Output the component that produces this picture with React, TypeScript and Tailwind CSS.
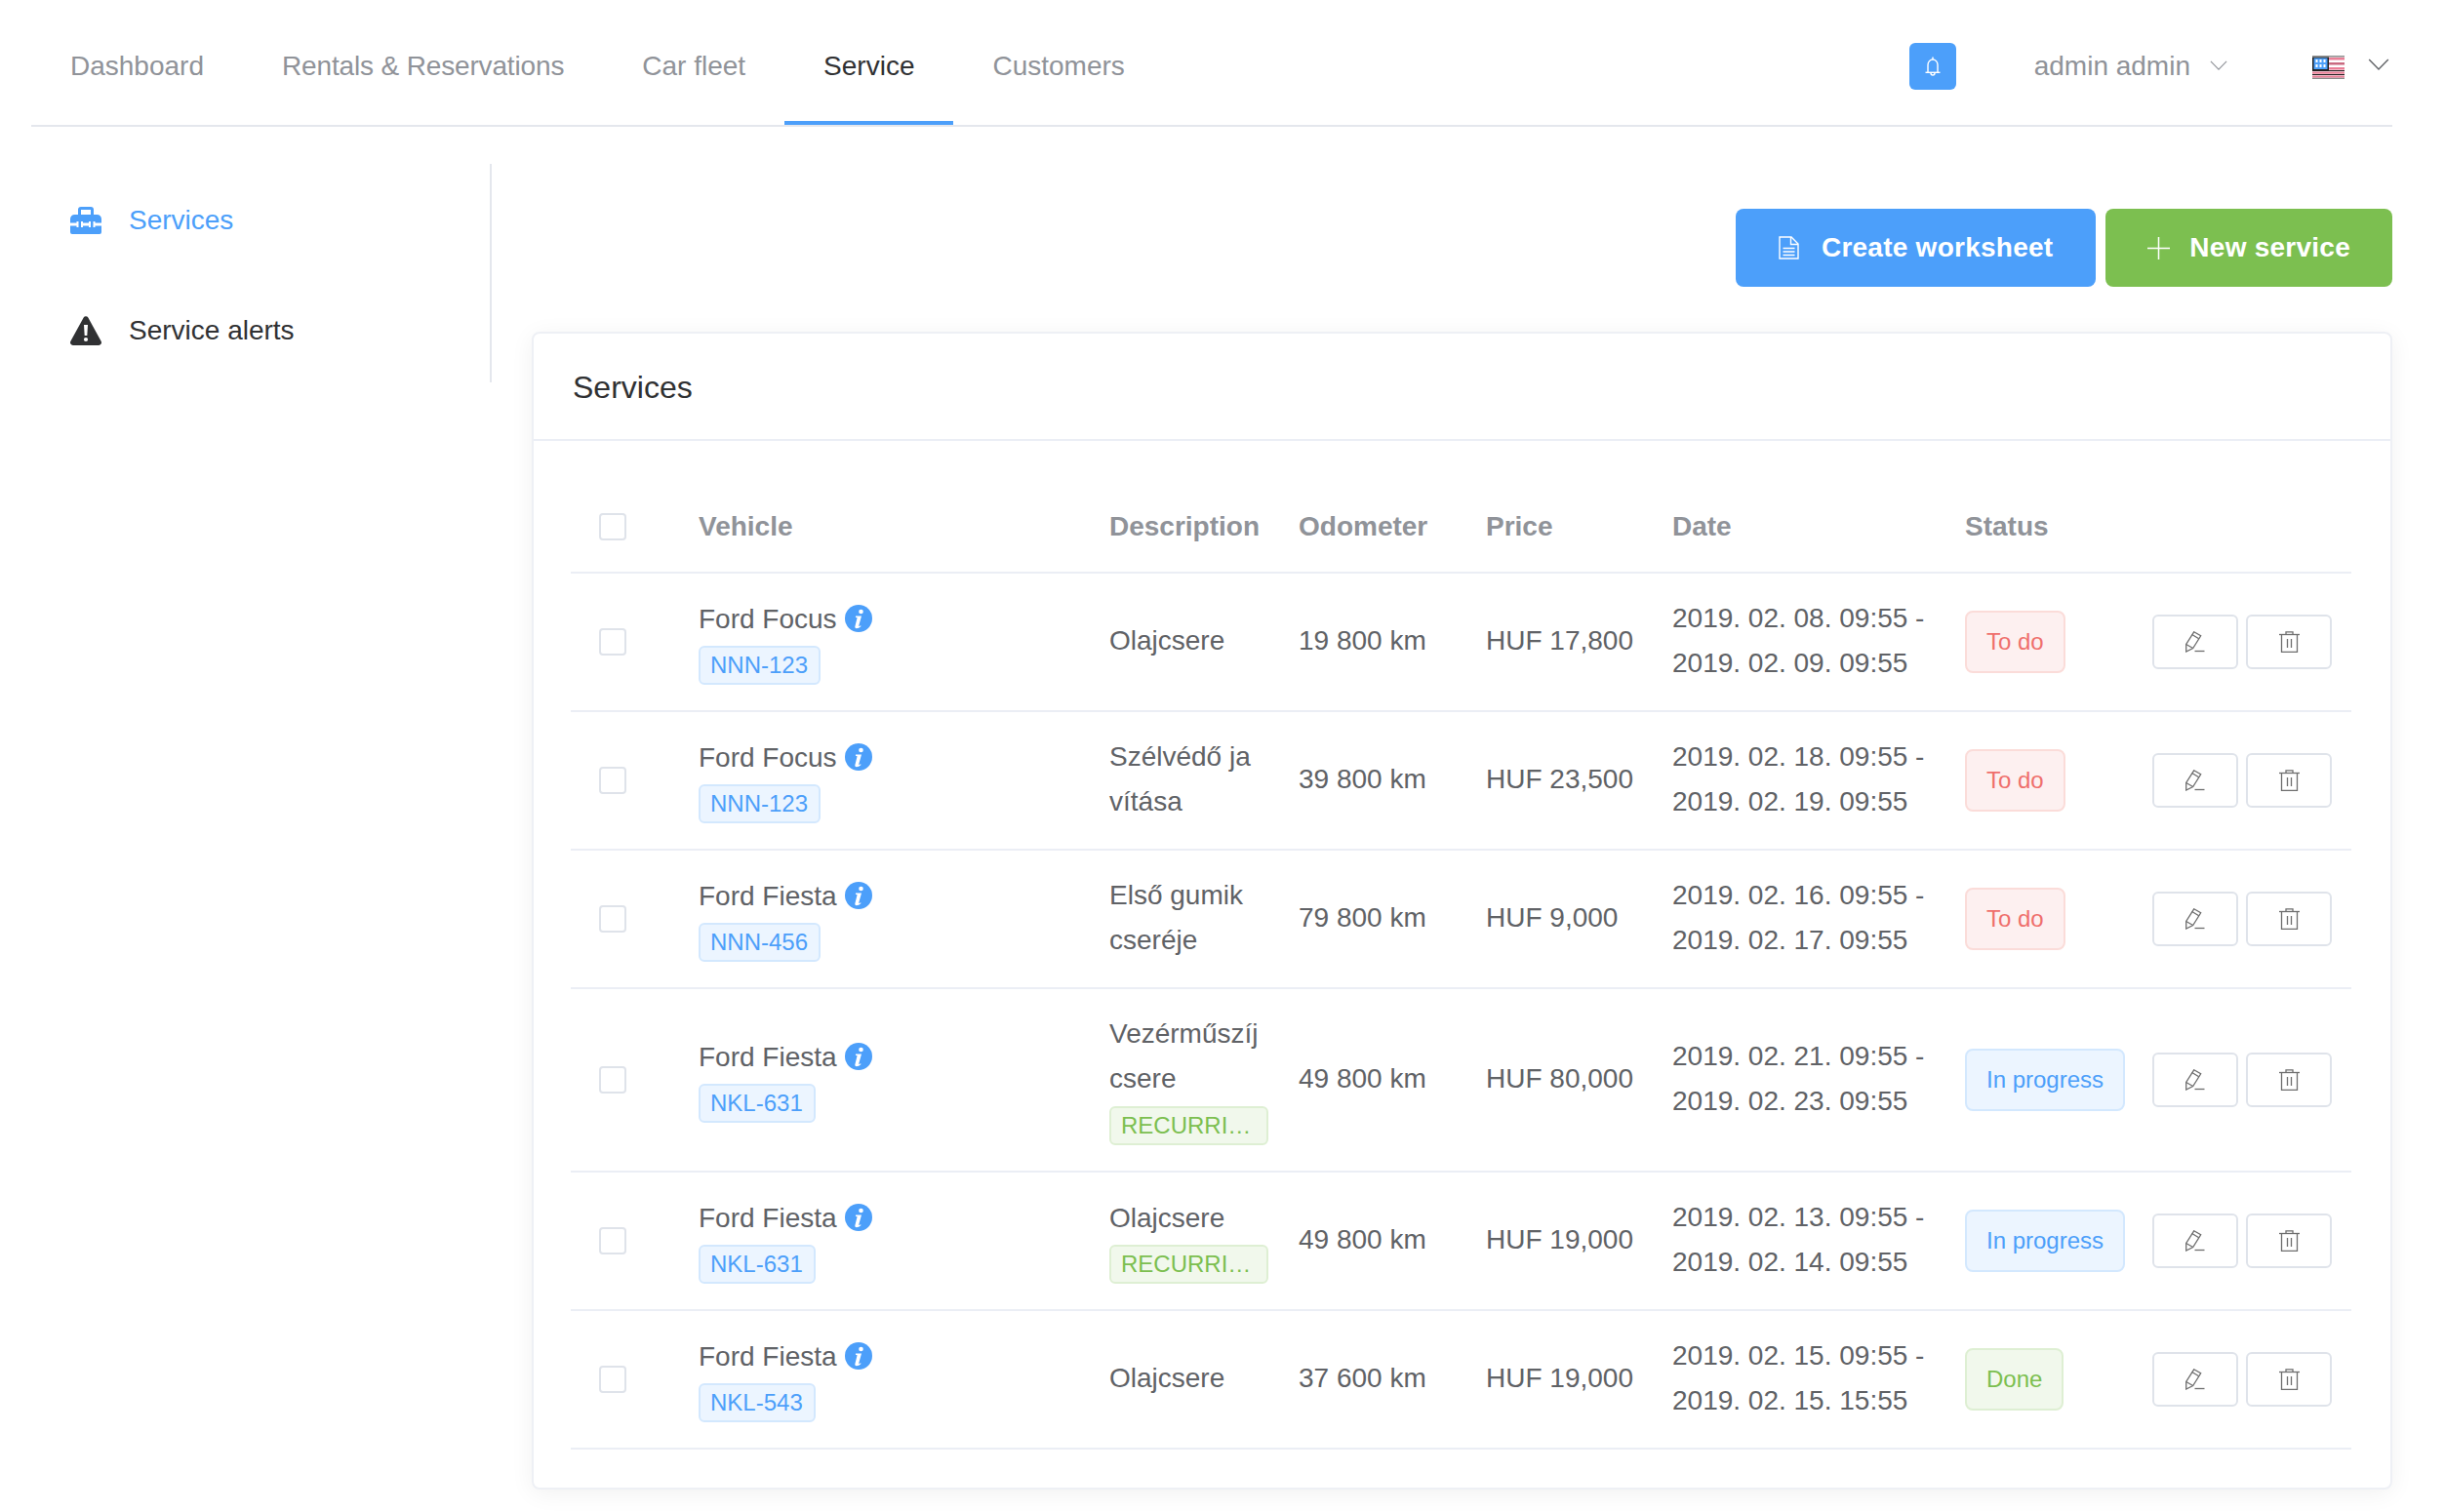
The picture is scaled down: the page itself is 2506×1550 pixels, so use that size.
import React from 'react';

type Tone = 'red' | 'blue' | 'green';

type Row = {
  vehicle: string;
  plate: string;
  description: string[];
  recurring?: boolean;
  odometer: string;
  price: string;
  from: string;
  to: string;
  status: string;
  tone: Tone;
};

const rows: Row[] = [
  { vehicle: 'Ford Focus', plate: 'NNN-123', description: ['Olajcsere'], odometer: '19 800 km', price: 'HUF 17,800', from: '2019. 02. 08. 09:55 -', to: '2019. 02. 09. 09:55', status: 'To do', tone: 'red' },
  { vehicle: 'Ford Focus', plate: 'NNN-123', description: ['Szélvédő ja', 'vítása'], odometer: '39 800 km', price: 'HUF 23,500', from: '2019. 02. 18. 09:55 -', to: '2019. 02. 19. 09:55', status: 'To do', tone: 'red' },
  { vehicle: 'Ford Fiesta', plate: 'NNN-456', description: ['Első gumik', 'cseréje'], odometer: '79 800 km', price: 'HUF 9,000', from: '2019. 02. 16. 09:55 -', to: '2019. 02. 17. 09:55', status: 'To do', tone: 'red' },
  { vehicle: 'Ford Fiesta', plate: 'NKL-631', description: ['Vezérműszíj', 'csere'], recurring: true, odometer: '49 800 km', price: 'HUF 80,000', from: '2019. 02. 21. 09:55 -', to: '2019. 02. 23. 09:55', status: 'In progress', tone: 'blue' },
  { vehicle: 'Ford Fiesta', plate: 'NKL-631', description: ['Olajcsere'], recurring: true, odometer: '49 800 km', price: 'HUF 19,000', from: '2019. 02. 13. 09:55 -', to: '2019. 02. 14. 09:55', status: 'In progress', tone: 'blue' },
  { vehicle: 'Ford Fiesta', plate: 'NKL-543', description: ['Olajcsere'], odometer: '37 600 km', price: 'HUF 19,000', from: '2019. 02. 15. 09:55 -', to: '2019. 02. 15. 15:55', status: 'Done', tone: 'green' },
];

const toneClass: Record<Tone, string> = {
  red: 'bg-[#fdf0f0] border-[#fbdcd9] text-[#ef6f6c]',
  blue: 'bg-[#ecf5ff] border-[#d3e8fe] text-[#4c9ffa]',
  green: 'bg-[#f1f8ec] border-[#deefd3] text-[#7cbf50]',
};

const tabs = ['Dashboard', 'Rentals & Reservations', 'Car fleet', 'Service', 'Customers'];

const Chevron = ({ className }: { className: string }) => (
  <svg viewBox="0 0 20 11" fill="none" stroke="currentColor" strokeWidth="1.3" className={className}>
    <path d="M1 1l9 9 9-9" />
  </svg>
);

const BellIcon = () => (
  <svg width="16" height="21" viewBox="0 0 16 21" fill="none" stroke="white" strokeWidth="1.4">
    <path d="M8 0.5V3" />
    <path d="M3 16V8.5a5 5.5 0 0 1 10 0V16" />
    <path d="M0.5 16.3H15.5" />
    <path d="M6 17a2 2 0 0 0 4 0" />
  </svg>
);

const FlagIcon = () => (
  <svg width="33" height="24" viewBox="0 0 33 24" className="mt-[1px]">
    <rect width="33" height="24" fill="#fff" />
    <rect width="33" height="1.5" fill="#8c8c8c" />
    <rect y="22.5" width="33" height="1.5" fill="#8c8c8c" />
    <rect x="16" y="2" width="17" height="2.5" fill="#ea7f97" />
    <rect x="16" y="7" width="17" height="2.5" fill="#c96a80" />
    <rect x="16" y="12" width="17" height="2.5" fill="#ea7f97" />
    <rect y="16.5" width="33" height="2.2" fill="#ea7f97" />
    <rect y="20.5" width="33" height="2" fill="#ea7f97" />
    <rect y="15" width="33" height="1" fill="#222" />
    <rect y="19" width="33" height="1" fill="#222" />
    <rect x="0" y="1.5" width="17" height="14" fill="#222" />
    <rect x="1.5" y="2.5" width="14" height="11.5" fill="#4c9ffa" />
    <g fill="#fff">
      <rect x="3.5" y="4" width="2" height="3" />
      <rect x="7.5" y="4" width="2" height="3" />
      <rect x="11.5" y="4" width="2" height="3" />
      <rect x="3.5" y="9" width="2" height="3" />
      <rect x="7.5" y="9" width="2" height="3" />
      <rect x="11.5" y="9" width="2" height="3" />
    </g>
  </svg>
);

const ToolboxIcon = () => (
  <svg width="32" height="28" viewBox="0 0 32 28" fill="#4c9ffa">
    <path d="M8 8V3a3 3 0 0 1 3-3h10a3 3 0 0 1 3 3v5h3.5A4.5 4.5 0 0 1 32 12.5V16.500H0V12.500A4.500 4.500 0 0 1 4.500 8zM11 3v5h10V3z" fillRule="evenodd" />
    <path d="M0 19.500H32V26a2 2 0 0 1-2 2H2a2 2 0 0 1-2-2z" />
    <rect x="6.500" y="15" width="6.500" height="6" fill="#fff" />
    <rect x="19" y="15" width="6.500" height="6" fill="#fff" />
    <rect x="8.500" y="14.500" width="2.500" height="7" />
    <rect x="21" y="14.500" width="2.500" height="7" />
  </svg>
);

const WarningIcon = () => (
  <svg width="32" height="30" viewBox="0 0 32 30">
    <path d="M13.700 1.500a2.700 2.700 0 0 1 4.600 0l13.300 24.300A2.800 2.800 0 0 1 29.200 30H2.800a2.800 2.800 0 0 1-2.400-4.200z" fill="#303133" />
    <path d="M14 9h4l-.7 11h-2.600z" fill="#fff" />
    <circle cx="16" cy="24" r="2.100" fill="#fff" />
  </svg>
);

const FileIcon = () => (
  <svg width="21" height="24" viewBox="0 0 21 24" fill="none" stroke="white" strokeWidth="1.400">
    <path d="M1 1h12l7 7v15H1z" />
    <path d="M12.500 1v7.500H20" />
    <path d="M4.500 12.500h12M4.500 16h12M4.500 19.500h12" />
  </svg>
);

const PlusIcon = () => (
  <svg width="23" height="23" viewBox="0 0 23 23" stroke="white" strokeWidth="1.500">
    <path d="M11.500 0v23M0 11.500h23" />
  </svg>
);

const InfoIcon = () => (
  <svg width="28" height="28" viewBox="0 0 28 28" className="ml-[8px] mb-[2px] shrink-0">
    <circle cx="14" cy="14" r="14" fill="#4c9ffa" />
    <circle cx="16.500" cy="7" r="2.300" fill="#fff" />
    <path d="M11 11.500h6l-2.800 10c-.1.600.5.600 1.900-.3l.4.800c-1.700 1.500-3.200 2.200-4.600 2.200-1.300 0-1.900-.8-1.500-2.100l2.200-8.800-1.700-.5z" fill="#fff" />
  </svg>
);

const EditIcon = () => (
  <svg width="21" height="22" viewBox="0 0 21 22" fill="none" stroke="#6e6e6e" strokeWidth="1.300">
    <path d="M8.700 .8l7 4-8 12.700L.7 21V13.500z" />
    <path d="M6.700 3.500l7 4.300" />
    <path d="M.7 13.500l7 4" />
    <path d="M9.500 20.500h10" />
  </svg>
);

const TrashIcon = () => (
  <svg width="21" height="22" viewBox="0 0 21 22" fill="none" stroke="#6e6e6e" strokeWidth="1.300">
    <path d="M0 3.500h21" />
    <path d="M7 3.500V.8h7v2.700" />
    <path d="M2.500 3.500v18h16v-18" />
    <path d="M8.500 8v9M12.500 8v9" />
  </svg>
);

const Checkbox = () => (
  <span className="block w-[28px] h-[28px] ml-[29px] bg-white rounded-[4px] border-2 border-[#dfe3ea]" />
);

const ActionButton = ({ children }: { children: React.ReactNode }) => (
  <button className="w-[88px] h-[56px] flex items-center justify-center bg-white rounded-[6px] border-2 border-[#dfe3ea]">
    {children}
  </button>
);

const headers = ['Vehicle', 'Description', 'Odometer', 'Price', 'Date', 'Status'];

const tabClass = (tab: string) => {
  if (tab === 'Service') {
    return 'h-[128px] px-[40px] pt-[12px] flex items-center border-b-4 border-[#4c9ffa] text-[#303133]';
  }
  if (tab === 'Rentals & Reservations') {
    return 'h-[128px] px-[40px] pt-[8px] flex items-center text-[#909399] tracking-[-0.15px]';
  }
  return 'h-[128px] px-[40px] pt-[8px] flex items-center text-[#909399]';
};

const App: React.FC = () => {
  return (
    <div className="w-[2506px] h-[1550px] pl-[32px] pr-[54px] bg-white text-[28px] leading-[46px] font-['Liberation_Sans',Arial,sans-serif] overflow-hidden">
      <nav className="h-[130px] flex items-start justify-between border-b-2 border-[#e4e7ed]">
        <div className="flex">
          {tabs.map((tab) => (
            <div key={tab} className={tabClass(tab)}>
              {tab}
            </div>
          ))}
        </div>
        <div className="h-[128px] pt-[8px] flex items-center">
          <button className="w-[48px] h-[48px] mr-[80px] flex items-center justify-center rounded-[6px] bg-[#4c9ffa]">
            <BellIcon />
          </button>
          <span className="text-[#909399]">admin admin</span>
          <Chevron className="w-[18px] h-[10px] ml-[20px] mr-[87px] mb-[2px] text-[#909399]" />
          <FlagIcon />
          <Chevron className="w-[22px] h-[12px] ml-[24px] mr-[3px] mb-[5px] text-[#606266]" />
        </div>
      </nav>

      <div className="flex">
        <aside className="w-[472px] h-[224px] mt-[38px] border-r-2 border-[#e4e7ed] shrink-0">
          <div className="h-[112px] px-[40px] pt-[4px] flex items-center gap-[28px] text-[#4c9ffa]">
            <ToolboxIcon />
            Services
          </div>
          <div className="h-[112px] px-[40px] pt-[5px] flex items-center gap-[28px] text-[#303133]">
            <WarningIcon />
            Service alerts
          </div>
        </aside>

        <main className="flex-1 ml-[41px] pt-[84px]">
          <div className="flex justify-end gap-[10px] text-white font-bold tracking-[0.25px]">
            <button className="h-[80px] px-[44px] flex items-center gap-[23px] rounded-[8px] bg-[#4c9ffa]">
              <FileIcon />
              Create worksheet
            </button>
            <button className="h-[80px] px-[43px] flex items-center gap-[20px] rounded-[8px] bg-[#7cbf50]">
              <PlusIcon />
              New service
            </button>
          </div>

          <section className="mt-[46px] bg-white rounded-[8px] border-2 border-[#eef0f5] shadow-[0_4px_24px_rgba(0,0,0,0.06)]">
            <div className="h-[110px] px-[40px] pt-[2px] flex items-center border-b-2 border-[#ebeef5] text-[32px] text-[#303133]">
              Services
            </div>
            <div className="px-[38px] pt-[40px] pb-[39px]">
              <table className="w-[1825px] table-fixed border-separate border-spacing-0 text-[#606266]">
                <colgroup>
                  <col className="w-[111px]" />
                  <col className="w-[421px]" />
                  <col className="w-[194px]" />
                  <col className="w-[192px]" />
                  <col className="w-[191px]" />
                  <col className="w-[300px]" />
                  <col className="w-[192px]" />
                  <col className="w-[224px]" />
                </colgroup>
                <thead>
                  <tr>
                    <th className="pt-[25px] pb-[23px] border-b-2 border-[#ebeef5]">
                      <Checkbox />
                    </th>
                    {headers.map((h) => (
                      <th key={h} className="pt-[25px] pb-[23px] px-[20px] text-left font-bold text-[#909399] border-b-2 border-[#ebeef5]">
                        {h}
                      </th>
                    ))}
                    <th className="border-b-2 border-[#ebeef5]" />
                  </tr>
                </thead>
                <tbody>
                  {rows.map((row, i) => (
                    <tr key={i}>
                      <td className="py-[24px] border-b-2 border-[#ebeef5]">
                        <Checkbox />
                      </td>
                      <td className="px-[20px] pt-[23px] pb-[25px] border-b-2 border-[#ebeef5]">
                        <div className="flex items-center">
                          {row.vehicle}
                          <InfoIcon />
                        </div>
                        <div className="w-fit h-[40px] mt-[4px] pl-[10px] pr-[11px] rounded-[6px] border-2 bg-[#ecf5ff] border-[#d3e8fe] text-[#4c9ffa] text-[24px] leading-[36px]">
                          {row.plate}
                        </div>
                      </td>
                      <td className="pl-[20px] pr-0 pt-[23px] pb-[25px] border-b-2 border-[#ebeef5]">
                        {row.description.map((line) => (
                          <div key={line}>{line}</div>
                        ))}
                        {row.recurring && (
                          <div
                            className={
                              row.description.length > 1
                                ? 'w-[163px] h-[40px] mt-[5px] mb-[1px] px-[10px] rounded-[6px] border-2 bg-[#f1f8ec] border-[#deefd3] text-[#7cbf50] text-[24px] leading-[36px] whitespace-nowrap'
                                : 'w-[163px] h-[40px] mt-[4px] px-[10px] rounded-[6px] border-2 bg-[#f1f8ec] border-[#deefd3] text-[#7cbf50] text-[24px] leading-[36px] whitespace-nowrap'
                            }
                          >
                            RECURRI…
                          </div>
                        )}
                      </td>
                      <td className="px-[20px] pt-[23px] pb-[25px] border-b-2 border-[#ebeef5] whitespace-nowrap">{row.odometer}</td>
                      <td className="px-[20px] pt-[23px] pb-[25px] border-b-2 border-[#ebeef5] whitespace-nowrap">{row.price}</td>
                      <td className="px-[20px] pt-[23px] pb-[25px] border-b-2 border-[#ebeef5] whitespace-nowrap">
                        <div>{row.from}</div>
                        <div>{row.to}</div>
                      </td>
                      <td className="px-[20px] py-[24px] border-b-2 border-[#ebeef5]">
                        <span className={`block w-fit h-[64px] px-[20px] rounded-[8px] border-2 text-[24px] leading-[60px] whitespace-nowrap ${toneClass[row.tone]}`}>
                          {row.status}
                        </span>
                      </td>
                      <td className="px-[20px] py-[24px] border-b-2 border-[#ebeef5]">
                        <div className="flex gap-[8px]">
                          <ActionButton>
                            <EditIcon />
                          </ActionButton>
                          <ActionButton>
                            <TrashIcon />
                          </ActionButton>
                        </div>
                      </td>
                    </tr>
                  ))}
                </tbody>
              </table>
            </div>
          </section>
        </main>
      </div>
    </div>
  );
};

export default App;
